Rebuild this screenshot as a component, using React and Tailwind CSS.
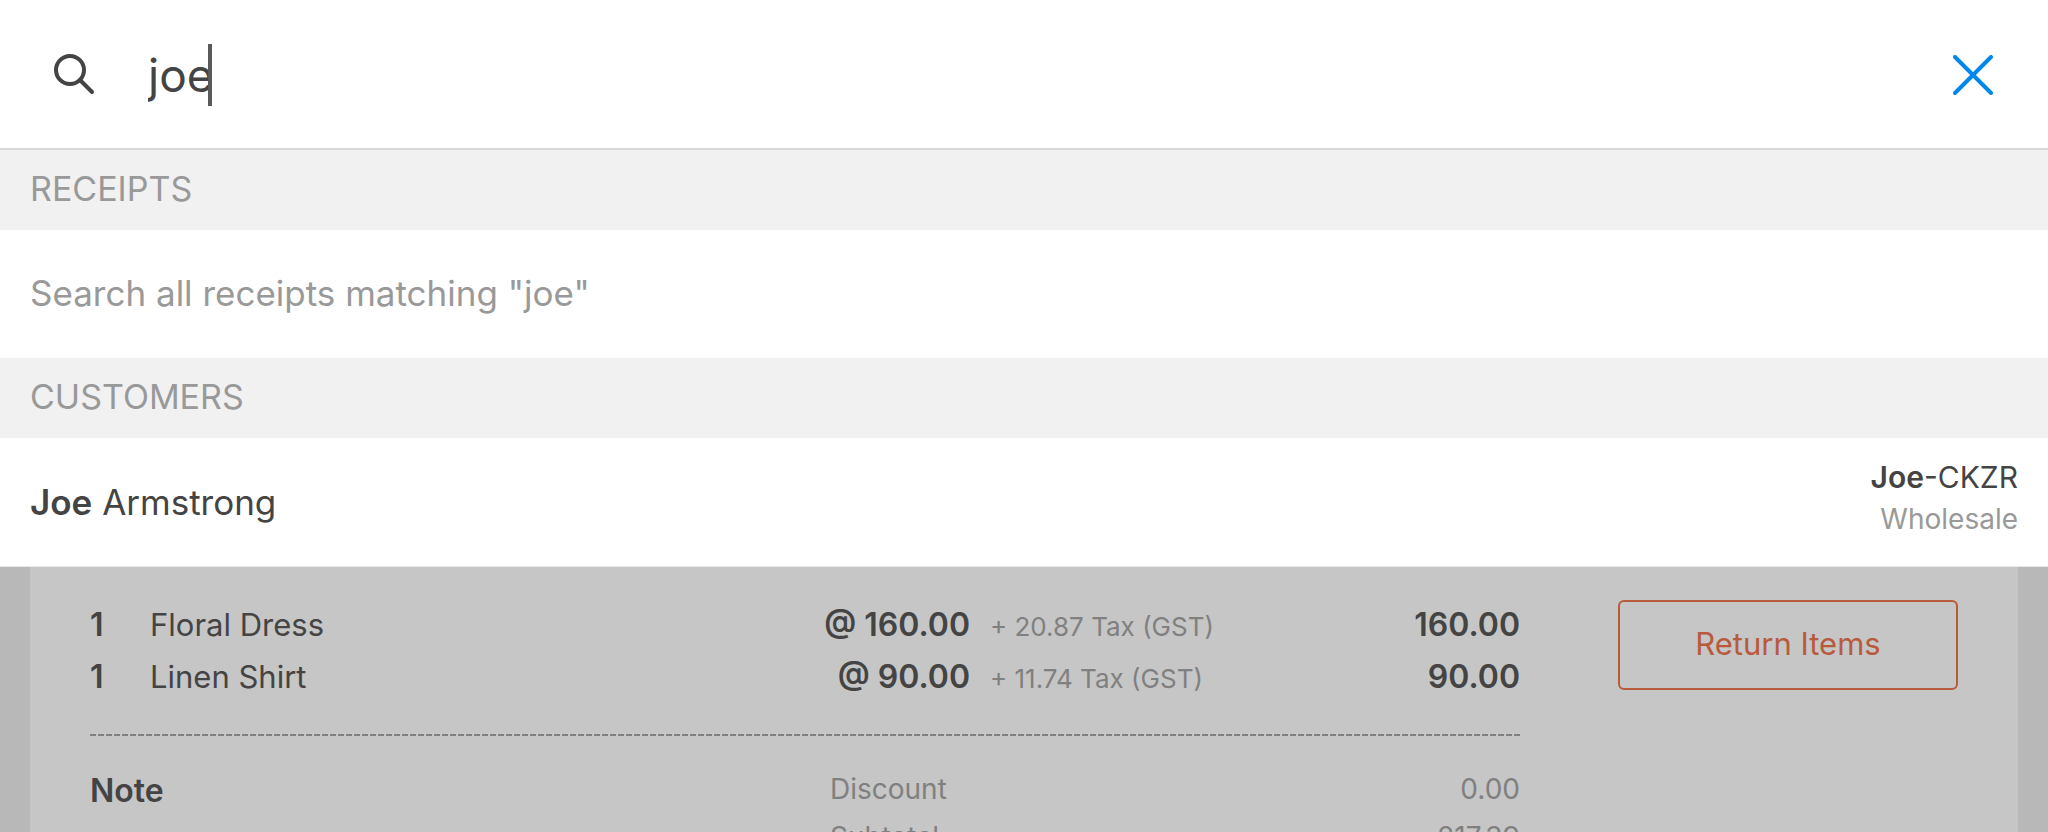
import { useState } from "react";

const items = [
  { qty: 1, name: "Floral Dress", price: "160.00", tax: "20.87", total: "160.00" },
  { qty: 1, name: "Linen Shirt", price: "90.00", tax: "11.74", total: "90.00" },
];

const totals = [
  { label: "Discount", value: "0.00" },
  { label: "Subtotal", value: "217.39" },
];

function SearchIcon() {
  return (
    <svg className="size-10 shrink-0 overflow-visible" viewBox="0 0 40 40" fill="none" stroke="#444444" strokeWidth="4" aria-hidden="true">
      <circle cx="16" cy="15" r="14" />
      <path d="M26 25 L38 37" strokeLinecap="round" />
    </svg>
  );
}

function CloseIcon() {
  return (
    <svg className="size-10" viewBox="0 0 40 40" fill="none" stroke="#0088ea" strokeWidth="4" strokeLinecap="round" aria-hidden="true">
      <path d="M2 2 L38 38 M38 2 L2 38" />
    </svg>
  );
}

function SectionHeading({ children }) {
  return (
    <h2 className="flex h-20 items-center bg-[#f1f1f1] px-[30px] pb-0.5 text-[34px] leading-[48px] text-[#999999]">
      {children}
    </h2>
  );
}

function SearchPanel() {
  const [query, setQuery] = useState("joe");
  return (
    <section className="shrink-0 border-b border-[#e8e8e8] bg-white">
      <form className="flex h-[150px] items-center border-b-2 border-[#d8d8d8] pt-0.5 pr-[55px] pl-[54px]" onSubmit={(e) => e.preventDefault()}>
        <label className="flex flex-1 items-center gap-[54px]">
          <SearchIcon />
          <span className="flex items-center">
            <input
              type="text"
              aria-label="Search"
              value={query}
              onChange={(e) => setQuery(e.target.value)}
              className="field-sizing-content h-[62px] bg-transparent text-[46px] text-[#444444] caret-transparent outline-none"
            />
            <span className="-ml-1.5 h-[62px] w-1 bg-[#5a5a5a]" />
          </span>
        </label>
        <button type="button" aria-label="Close search">
          <CloseIcon />
        </button>
      </form>

      <SectionHeading>RECEIPTS</SectionHeading>
      <a href="#receipts" className="flex h-32 items-center px-[30px] pb-0.5 text-[35px] leading-[48px] text-[#999999]">
        Search all receipts matching "{query}"
      </a>

      <SectionHeading>CUSTOMERS</SectionHeading>
      <a href="#customer" className="flex h-32 items-center justify-between px-[30px] text-[#444444]">
        <span className="text-[35px] leading-[50px]">
          <b className="font-semibold">Joe</b> Armstrong
        </span>
        <span className="pb-2 text-right">
          <span className="block text-[30px] leading-[42px]">
            <b className="font-semibold">Joe</b>-CKZR
          </span>
          <span className="block text-[28px] leading-[42px] text-[#999999]">Wholesale</span>
        </span>
      </a>
    </section>
  );
}

function Receipt() {
  return (
    <main className="mx-[30px] flex flex-1 items-start gap-[98px] bg-[#c6c6c6] px-[60px] pt-8 text-[#444444]">
      <div className="flex-1">
        <table className="w-full table-fixed text-[32px] leading-[52px]">
          <colgroup>
            <col className="w-[60px]" />
            <col />
            <col className="w-[240px]" />
            <col className="w-[300px]" />
            <col className="w-[250px]" />
          </colgroup>
          <tbody>
            {items.map((item) => (
              <tr key={item.name} className="align-baseline">
                <td className="p-0 font-semibold">{item.qty}</td>
                <td className="p-0 text-[31px] leading-10">{item.name}</td>
                <td className="p-0 text-right font-semibold">@ {item.price}</td>
                <td className="p-0 pl-5 text-[26px] leading-10 whitespace-nowrap text-[#808080]">+ {item.tax} Tax (GST)</td>
                <td className="p-0 text-right font-semibold">{item.total}</td>
              </tr>
            ))}
          </tbody>
        </table>

        <div className="mt-[31px] h-0.5 bg-[repeating-linear-gradient(to_right,#808080_0_6px,transparent_6px_8px)]" />

        <div className="mt-[29px] grid grid-cols-[1fr_690px]">
          <h3 className="text-[32px] leading-[52px] font-semibold">Note</h3>
          <dl className="text-[28px] leading-[48px] text-[#808080]">
            {totals.map((t) => (
              <div key={t.label} className="flex justify-between">
                <dt>{t.label}</dt>
                <dd>{t.value}</dd>
              </div>
            ))}
          </dl>
        </div>
      </div>

      <button type="button" className="mt-px h-[90px] w-[340px] rounded-md border-2 border-[#b85a3c] pb-0.5 text-[31px] text-[#b85a3c]">
        Return Items
      </button>
    </main>
  );
}

export default function App() {
  return (
    <div className="flex h-screen flex-col overflow-hidden bg-[#b8b8b8] font-['Inter',sans-serif]">
      <SearchPanel />
      <Receipt />
    </div>
  );
}
